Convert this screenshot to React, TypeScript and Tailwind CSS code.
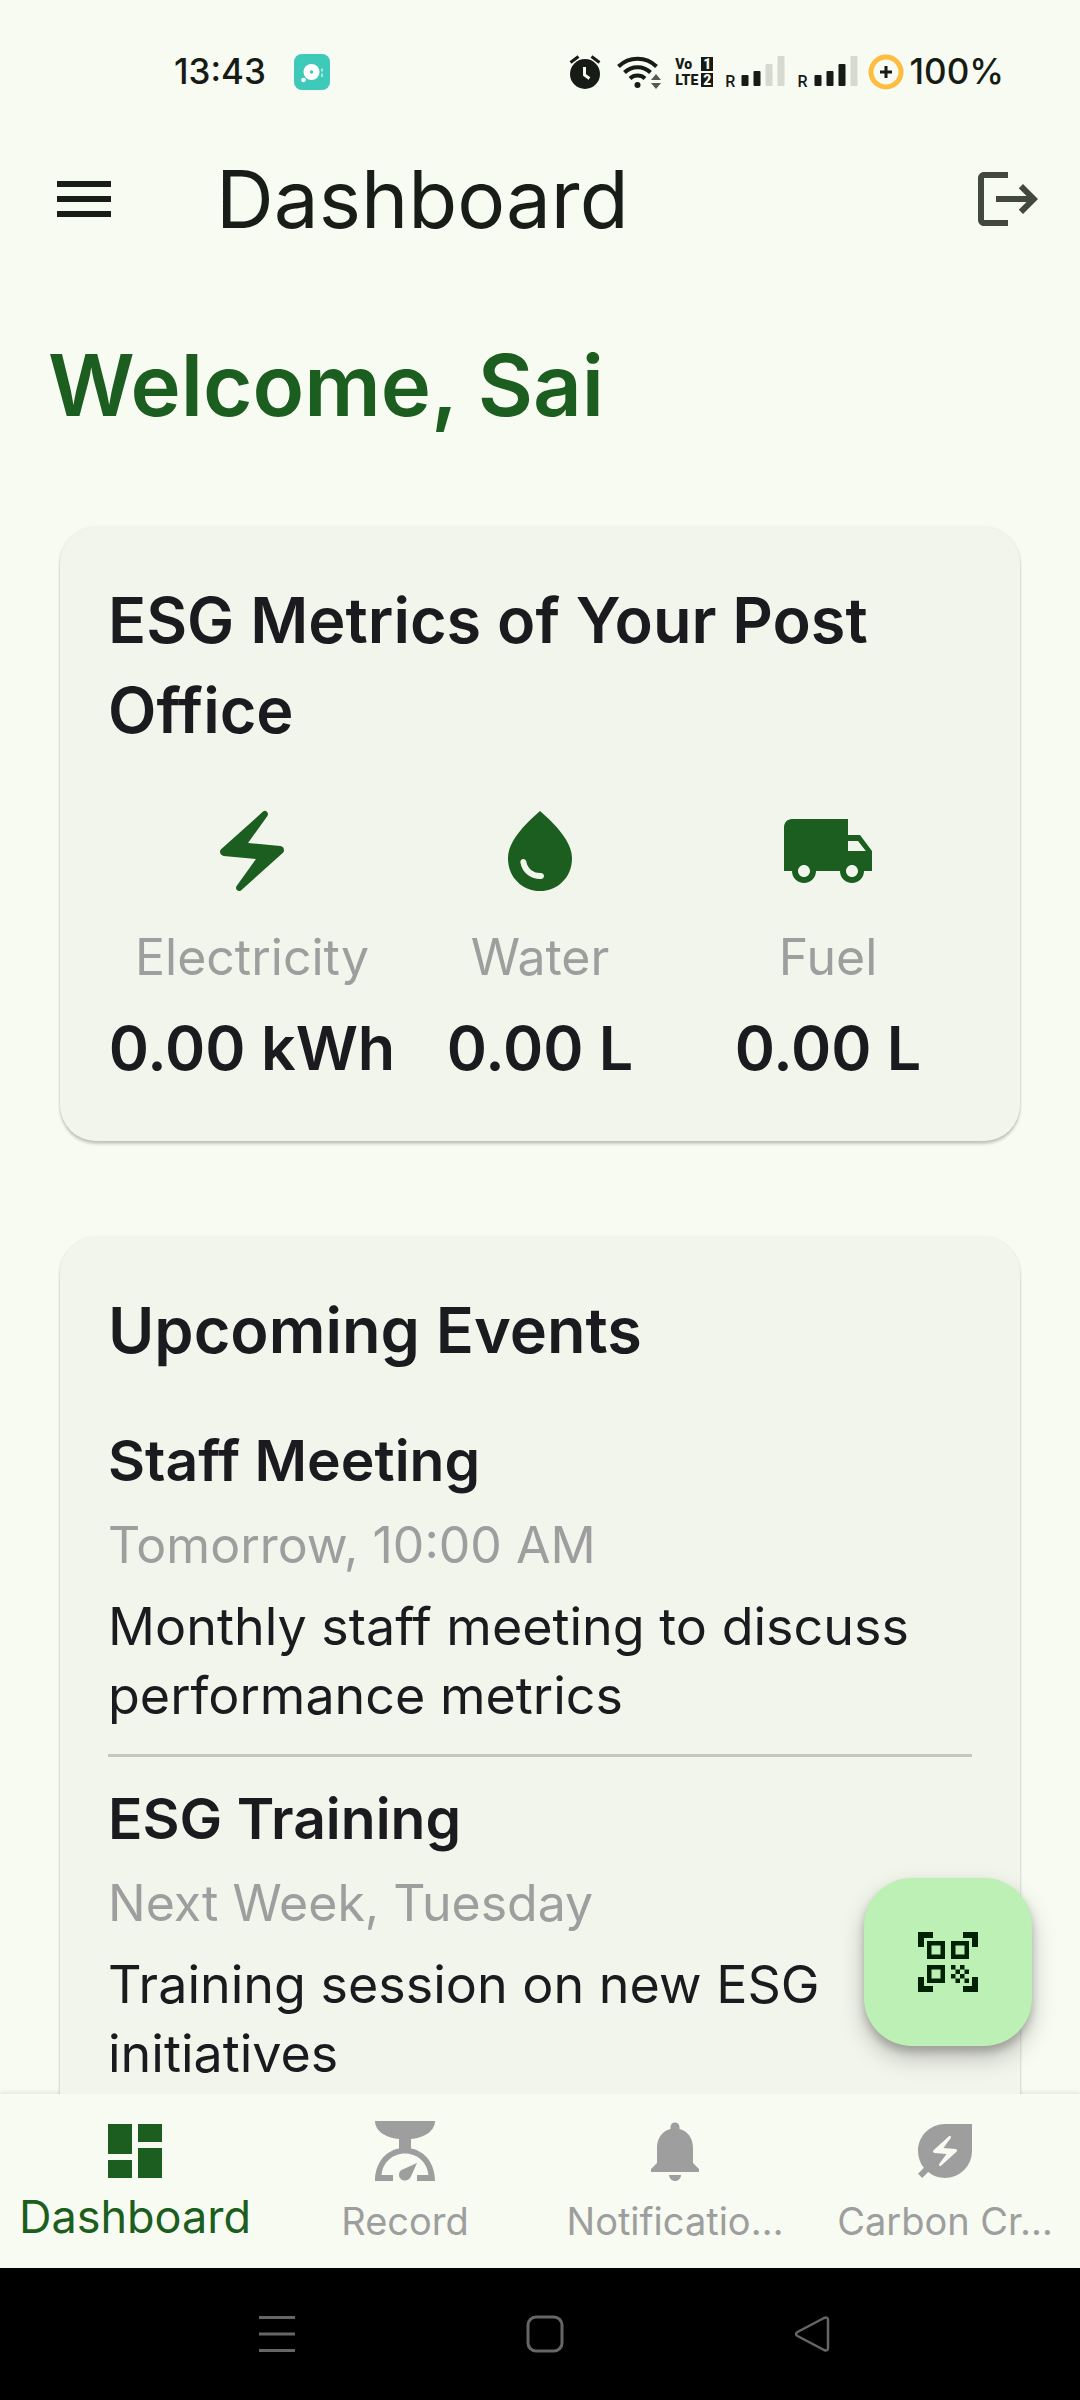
import type { ComponentType, ReactNode } from "react";
import {
  MdDashboard,
  MdElectricBolt,
  MdEnergySavingsLeaf,
  MdLocalShipping,
  MdLogout,
  MdMenu,
  MdNotifications,
  MdQrCodeScanner,
  MdWaterDrop,
} from "react-icons/md";

type IconType = ComponentType<{ className?: string }>;

function ScaleIcon({ className }: { className?: string }) {
  return (
    <svg viewBox="0 0 24 24" fill="currentColor" className={className} aria-hidden="true">
      <path d="M2 2h20c0 3.200-3.400 5.600-8 6v3.200c4.600.8 8 5 8 10.800h-6v-2h3.800C19.500 15.900 16.200 12.800 12 12.800S4.500 15.900 4.200 20H8v2H2c0-5.800 3.400-10 8-10.800V8C5.400 7.600 2 5.200 2 2z" />
      <path d="M16 16l-2.100 4.700c-.8 1.700-3.900 1.500-3.900-.9 0-.6.3-1.100.8-1.500z" />
    </svg>
  );
}

function ChatBadge() {
  return (
    <svg viewBox="0 0 36 36" className="size-9" aria-hidden="true">
      <rect width="36" height="36" rx="8" fill="#3fc9b8" />
      <circle cx="17.500" cy="18" r="8" fill="#fff" />
      <circle cx="17.500" cy="18" r="1.700" fill="#3fc9b8" />
      <circle cx="9.500" cy="26" r="2.300" fill="#fff" />
      <path d="M28 14.500v3M28 19.500v3.500" stroke="#a9e9e0" strokeWidth="2" />
    </svg>
  );
}

function AlarmIcon() {
  return (
    <svg viewBox="0 0 32 36" className="h-9 w-8" aria-hidden="true">
      <circle cx="16" cy="20" r="15" fill="#171b16" />
      <path d="M1.500 8.500l8-6M30.500 8.500l-8-6" stroke="#171b16" strokeWidth="3" />
      <path d="M15.500 13v8l5 3.500" stroke="#f8fbf1" strokeWidth="3" fill="none" />
    </svg>
  );
}

function WifiIcon() {
  return (
    <svg viewBox="0 0 44 36" className="h-9 w-11" aria-hidden="true">
      <g fill="none" stroke="#171b16" strokeWidth="4">
        <path d="M1.500 12.500a27 27 0 0 1 38 0" />
        <path d="M7.500 18.500a18.500 18.500 0 0 1 26 0" />
        <path d="M13 24.500a11 11 0 0 1 15 0" />
      </g>
      <circle cx="20.500" cy="31" r="3" fill="#171b16" />
      <path d="M39 20l5 6H34zM34 29h10l-5 6z" fill="#555a52" />
    </svg>
  );
}

function Signal({ level }: { level: number }) {
  return (
    <div className="flex items-end">
      <span className="mr-1.5 font-[Roboto] text-base leading-3 font-medium">R</span>
      <svg viewBox="0 0 43 32" className="h-8 w-11" aria-hidden="true">
        {[11, 15, 22, 30].map((height, i) => (
          <rect key={height} x={i * 12} y={30 - height} width="7" height={height} rx="1" fill={i < level ? "#171b16" : "#d5d9cf"} />
        ))}
      </svg>
    </div>
  );
}

function VolteIcon() {
  return (
    <div className="grid grid-cols-[26px_12px] gap-y-0.5 font-[Roboto] text-sm leading-3.5 font-black">
      <span>Vo</span>
      <span className="bg-[#171b16] text-center text-[#f8fbf1]">1</span>
      <span>LTE</span>
      <span className="bg-[#171b16] text-center text-[#f8fbf1]">2</span>
    </div>
  );
}

function StatusBar() {
  return (
    <div className="flex h-[115px] shrink-0 items-center pt-7 pr-[76px] pl-[174px] text-[35px] font-medium text-[#171b16]">
      <span>13:43</span>
      <span className="ml-7">
        <ChatBadge />
      </span>
      <div className="ml-auto flex items-center">
        <AlarmIcon />
        <span className="ml-4">
          <WifiIcon />
        </span>
        <span className="ml-3.5">
          <VolteIcon />
        </span>
        <span className="ml-3">
          <Signal level={2} />
        </span>
        <span className="ml-3">
          <Signal level={3} />
        </span>
        <svg viewBox="0 0 36 36" className="ml-2.5 size-9" aria-hidden="true">
          <circle cx="18" cy="18" r="15" fill="none" stroke="#fdbd41" strokeWidth="5" />
          <path d="M18 12v12M12 18h12" stroke="#171b16" strokeWidth="3" />
        </svg>
        <span className="ml-1.5">100%</span>
      </div>
    </div>
  );
}

function Card({ title, children }: { title: string; children: ReactNode }) {
  return (
    <section className="rounded-[36px] bg-[#f2f5eb] p-12 shadow-[0_3px_3px_rgba(0,0,0,0.2),0_0_3px_rgba(0,0,0,0.08)]">
      <h2 className="text-[63px] leading-[90px] font-semibold">{title}</h2>
      {children}
    </section>
  );
}

const metrics: { icon: IconType; label: string; value: string }[] = [
  { icon: MdElectricBolt, label: "Electricity", value: "0.00 kWh" },
  { icon: MdWaterDrop, label: "Water", value: "0.00 L" },
  { icon: MdLocalShipping, label: "Fuel", value: "0.00 L" },
];

const events = [
  { title: "Staff Meeting", when: "Tomorrow, 10:00 AM", text: "Monthly staff meeting to discuss performance metrics" },
  { title: "ESG Training", when: "Next Week, Tuesday", text: "Training session on new ESG initiatives" },
];

const tabs: { icon: IconType; label: string; active?: boolean }[] = [
  { icon: MdDashboard, label: "Dashboard", active: true },
  { icon: ScaleIcon, label: "Record" },
  { icon: MdNotifications, label: "Notificatio…" },
  { icon: MdEnergySavingsLeaf, label: "Carbon Cr…" },
];

export default function App() {
  return (
    <div className="flex h-screen flex-col bg-[#f8fbf1] font-[Inter,sans-serif] text-[#1b1b1f]">
      <StatusBar />

      <header className="flex h-[168px] shrink-0 items-center pr-9 pl-12 text-[#191d17]">
        <button type="button" aria-label="Open menu">
          <MdMenu className="size-[72px]" />
        </button>
        <h1 className="ml-24 text-[80px] leading-[108px]">Dashboard</h1>
        <button type="button" aria-label="Log out" className="ml-auto text-[#43483f]">
          <MdLogout className="size-[72px]" />
        </button>
      </header>

      <div className="relative flex min-h-0 flex-1 flex-col">
        <main className="min-h-0 flex-1 overflow-y-auto pt-10 [scrollbar-width:none]">
          <p className="px-12 text-[85px] leading-[126px] font-semibold text-[#1b5e20]">Welcome, Sai</p>
          <div className="mt-[78px] flex flex-col gap-24 px-15 pb-12">
            <Card title="ESG Metrics of Your Post Office">
              <div className="mt-12 grid grid-cols-3">
                {metrics.map(({ icon: Icon, label, value }) => (
                  <div key={label} className="flex flex-col items-center whitespace-nowrap">
                    <Icon className="size-24 text-[#1b5e20]" />
                    <span className="mt-[22px] text-[50px] leading-[72px] text-[#9e9e9e]">{label}</span>
                    <span className="mt-2.5 text-[61px] leading-[90px] font-semibold">{value}</span>
                  </div>
                ))}
              </div>
            </Card>
            <Card title="Upcoming Events">
              <div className="mt-11">
                {events.map(({ title, when, text }, i) => (
                  <article key={title} className={i > 0 ? "mt-6 border-t-3 border-[#c4c8bb] pt-5" : ""}>
                    <h3 className="text-[57px] leading-[84px] font-semibold">{title}</h3>
                    <p className="mt-2 text-[50px] leading-[69px] text-[#9e9e9e]">{when}</p>
                    <p className="mt-3 text-[52px] leading-[69px]">{text}</p>
                  </article>
                ))}
              </div>
            </Card>
          </div>
        </main>
        <button
          type="button"
          aria-label="Scan QR code"
          className="absolute right-12 bottom-12 flex size-[168px] items-center justify-center rounded-[48px] bg-[#bcf0b4] text-[#002204] shadow-[0_12px_24px_rgba(0,0,0,0.22),0_6px_9px_rgba(0,0,0,0.2)]"
        >
          <MdQrCodeScanner className="size-[72px]" />
        </button>
      </div>

      <nav className="grid h-[174px] shrink-0 grid-cols-4 bg-[#f8fbf1] shadow-[0_-2px_4px_rgba(0,0,0,0.08)]">
        {tabs.map(({ icon: Icon, label, active }) => (
          <button
            key={label}
            type="button"
            className={
              active
                ? "flex flex-col items-center pt-[21px] text-[45px] leading-[60px] whitespace-nowrap text-[#1b5e20]"
                : "flex flex-col items-center pt-[21px] text-[38px] leading-[68px] whitespace-nowrap text-[#9e9e9e]"
            }
          >
            <Icon className="size-[72px] shrink-0" />
            {label}
          </button>
        ))}
      </nav>

      <div className="flex h-[132px] shrink-0 items-center justify-center gap-[230px] bg-black pl-2.5 text-[#666666]">
        <button type="button" aria-label="Recent apps">
          <svg viewBox="0 0 38 38" className="size-[38px]" stroke="currentColor" strokeWidth="3">
            <path d="M1 2.500h36M1 19h36M1 35.500h36" />
          </svg>
        </button>
        <button type="button" aria-label="Home">
          <svg viewBox="0 0 38 38" className="size-[38px]" fill="none" stroke="currentColor" strokeWidth="3">
            <rect x="2" y="2" width="34" height="34" rx="8" />
          </svg>
        </button>
        <button type="button" aria-label="Back">
          <svg viewBox="0 0 38 38" className="size-[38px]" fill="none" stroke="currentColor" strokeWidth="2.500" strokeLinejoin="round">
            <path d="M3.500 17L30 3q4-1.500 4 2v28q0 3.500-4 2L3.500 21q-3-2 0-4z" />
          </svg>
        </button>
      </div>
    </div>
  );
}
